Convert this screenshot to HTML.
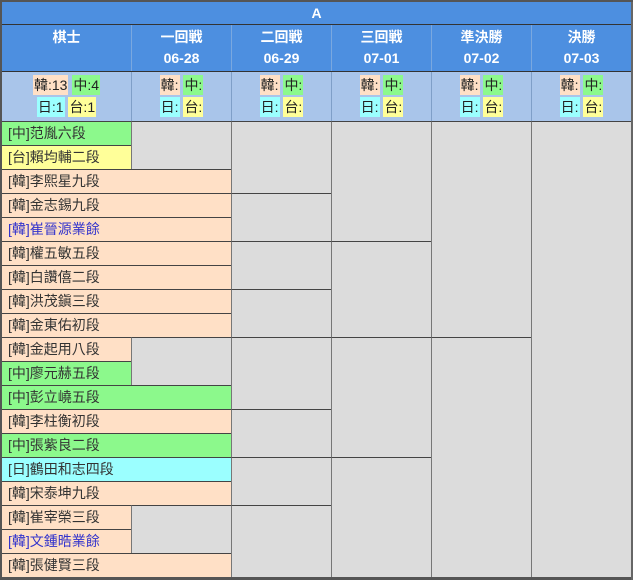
<!DOCTYPE html>
<html><head><meta charset="utf-8"><style>
*{margin:0;padding:0;box-sizing:border-box}
body{width:633px;height:580px;background:#fff;font-family:"Liberation Sans","Noto Sans CJK TC",sans-serif;position:relative;overflow:hidden}
.c{position:absolute;border-top:1px solid #444;border-left:1px solid #777;background:#dcdcdc}
.n{font-size:14px;color:#333;padding-left:6px;line-height:22px;white-space:nowrap}
.k{background:#ffe0c6}.z{background:#8cf98c}.t{background:#ffff99}.j{background:#9bffff}
.b{color:#3333cc}
.h{position:absolute;background:#4d8fe0;color:#fff;font-weight:bold;font-size:14px;text-align:center;border-left:1px solid #7aa8e0}
.s{position:absolute;background:#a9c5ea;text-align:center;font-size:14px;color:#222;line-height:22px;border-left:1px solid #7f9fc8}
.s span{padding:2px 1px}
</style></head><body>
<div style="position:absolute;left:0;top:0;width:633px;height:580px;border:2px solid #555;border-right:2px solid #666;border-bottom:3px solid #555;background:#dcdcdc"></div>
<div class="h" style="left:2px;top:2px;width:629px;height:22px;line-height:22px;border:none">A</div>
<div style="position:absolute;left:2px;top:24px;width:629px;height:1px;background:#333"></div>
<div class="h" style="left:2px;top:25px;width:129px;height:46px;padding-top:2px;line-height:21px;border:none">棋士</div>
<div class="h" style="left:131px;top:25px;width:100px;height:46px;padding-top:2px;line-height:21px">一回戦<br>06-28</div>
<div class="h" style="left:231px;top:25px;width:100px;height:46px;padding-top:2px;line-height:21px">二回戦<br>06-29</div>
<div class="h" style="left:331px;top:25px;width:100px;height:46px;padding-top:2px;line-height:21px">三回戦<br>07-01</div>
<div class="h" style="left:431px;top:25px;width:100px;height:46px;padding-top:2px;line-height:21px">準決勝<br>07-02</div>
<div class="h" style="left:531px;top:25px;width:100px;height:46px;padding-top:2px;line-height:21px">決勝<br>07-03</div>
<div style="position:absolute;left:2px;top:71px;width:629px;height:1px;background:#333"></div>
<div class="s" style="left:2px;top:72px;width:129px;height:49px;padding-top:2px;border:none"><span class="k">韓:13</span> <span class="z">中:4</span><br><span class="j">日:1</span> <span class="t">台:1</span></div>
<div class="s" style="left:131px;top:72px;width:100px;height:49px;padding-top:2px"><span class="k">韓:</span> <span class="z">中:</span><br><span class="j">日:</span> <span class="t">台:</span></div>
<div class="s" style="left:231px;top:72px;width:100px;height:49px;padding-top:2px"><span class="k">韓:</span> <span class="z">中:</span><br><span class="j">日:</span> <span class="t">台:</span></div>
<div class="s" style="left:331px;top:72px;width:100px;height:49px;padding-top:2px"><span class="k">韓:</span> <span class="z">中:</span><br><span class="j">日:</span> <span class="t">台:</span></div>
<div class="s" style="left:431px;top:72px;width:100px;height:49px;padding-top:2px"><span class="k">韓:</span> <span class="z">中:</span><br><span class="j">日:</span> <span class="t">台:</span></div>
<div class="s" style="left:531px;top:72px;width:100px;height:49px;padding-top:2px"><span class="k">韓:</span> <span class="z">中:</span><br><span class="j">日:</span> <span class="t">台:</span></div>

<div class="c n z" style="left:2px;top:121px;width:129px;height:24px;border-left:none">[中]范胤六段</div>
<div class="c n t" style="left:2px;top:145px;width:129px;height:24px;border-left:none">[台]賴均輔二段</div>
<div class="c" style="left:131px;top:121px;width:100px;height:48px"></div>
<div class="c n k" style="left:2px;top:169px;width:229px;height:24px;border-left:none">[韓]李熙星九段</div>
<div class="c n k" style="left:2px;top:193px;width:229px;height:24px;border-left:none">[韓]金志錫九段</div>
<div class="c n k b" style="left:2px;top:217px;width:229px;height:24px;border-left:none">[韓]崔晉源業餘</div>
<div class="c n k" style="left:2px;top:241px;width:229px;height:24px;border-left:none">[韓]權五敏五段</div>
<div class="c n k" style="left:2px;top:265px;width:229px;height:24px;border-left:none">[韓]白讚僖二段</div>
<div class="c n k" style="left:2px;top:289px;width:229px;height:24px;border-left:none">[韓]洪茂鎭三段</div>
<div class="c n k" style="left:2px;top:313px;width:229px;height:24px;border-left:none">[韓]金東佑初段</div>
<div class="c n k" style="left:2px;top:337px;width:129px;height:24px;border-left:none">[韓]金起用八段</div>
<div class="c n z" style="left:2px;top:361px;width:129px;height:24px;border-left:none">[中]廖元赫五段</div>
<div class="c" style="left:131px;top:337px;width:100px;height:48px"></div>
<div class="c n z" style="left:2px;top:385px;width:229px;height:24px;border-left:none">[中]彭立嶢五段</div>
<div class="c n k" style="left:2px;top:409px;width:229px;height:24px;border-left:none">[韓]李柱衡初段</div>
<div class="c n z" style="left:2px;top:433px;width:229px;height:24px;border-left:none">[中]張紫良二段</div>
<div class="c n j" style="left:2px;top:457px;width:229px;height:24px;border-left:none">[日]鶴田和志四段</div>
<div class="c n k" style="left:2px;top:481px;width:229px;height:24px;border-left:none">[韓]宋泰坤九段</div>
<div class="c n k" style="left:2px;top:505px;width:129px;height:24px;border-left:none">[韓]崔宰榮三段</div>
<div class="c n k b" style="left:2px;top:529px;width:129px;height:24px;border-left:none">[韓]文鍾晧業餘</div>
<div class="c" style="left:131px;top:505px;width:100px;height:48px"></div>
<div class="c n k" style="left:2px;top:553px;width:229px;height:24px;border-left:none">[韓]張健賢三段</div>

<div class="c" style="left:231px;top:121px;width:100px;height:72px"></div>
<div class="c" style="left:231px;top:193px;width:100px;height:48px"></div>
<div class="c" style="left:231px;top:241px;width:100px;height:48px"></div>
<div class="c" style="left:231px;top:289px;width:100px;height:48px"></div>
<div class="c" style="left:231px;top:337px;width:100px;height:72px"></div>
<div class="c" style="left:231px;top:409px;width:100px;height:48px"></div>
<div class="c" style="left:231px;top:457px;width:100px;height:48px"></div>
<div class="c" style="left:231px;top:505px;width:100px;height:72px"></div>
<div class="c" style="left:331px;top:121px;width:100px;height:120px"></div>
<div class="c" style="left:331px;top:241px;width:100px;height:96px"></div>
<div class="c" style="left:331px;top:337px;width:100px;height:120px"></div>
<div class="c" style="left:331px;top:457px;width:100px;height:120px"></div>
<div class="c" style="left:431px;top:121px;width:100px;height:216px"></div>
<div class="c" style="left:431px;top:337px;width:100px;height:240px"></div>
<div class="c" style="left:531px;top:121px;width:100px;height:456px"></div>
<div style="position:absolute;left:0;top:577px;width:633px;height:3px;background:#555"></div>
<div style="position:absolute;left:631px;top:0;width:2px;height:580px;background:#666"></div>
<div style="position:absolute;left:0;top:0;width:2px;height:580px;background:#555"></div>
<div style="position:absolute;left:0;top:0;width:633px;height:2px;background:#555"></div>
</body></html>
